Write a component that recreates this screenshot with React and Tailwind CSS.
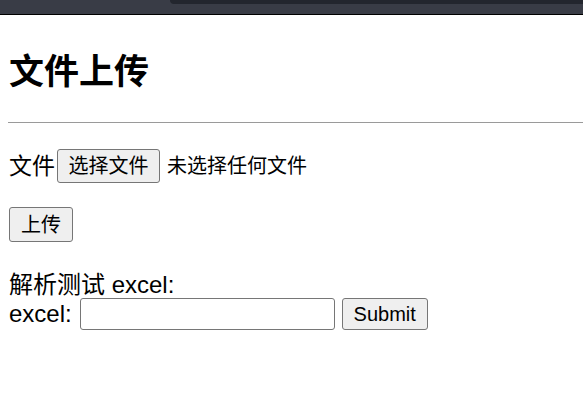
export default function App() {
  const body = { fontFamily: '"Liberation Sans", "Noto Sans CJK SC", sans-serif' };
  return (
    <div className="min-h-[405px] w-[583px] overflow-hidden bg-white text-black" style={body}>
      <div className="relative h-[15px] border-b border-black bg-[#393c46]">
        <div className="absolute right-0 top-0 left-[170px] h-[4px] rounded-bl-[8px] bg-[#23262e]" />
      </div>
      <div className="pl-[9px]">
        <h1 className="mt-[37px] text-[35px] font-bold leading-[40px]">文件上传</h1>
        <hr className="-ml-[1px] mt-[30px] border-t border-[#9a9a9a]" />
        <div className="mt-[26px] flex h-[34px] items-center">
          <span className="text-[23px] leading-[28px]">文件</span>
          <button className="ml-[2px] h-[34px] w-[103px] rounded-[3px] border border-[#767676] bg-[#efefef] text-[20px] leading-[24px]">
            选择文件
          </button>
          <span className="ml-[7px] text-[20px] leading-[24px]">未选择任何文件</span>
        </div>
        <button className="mt-[24px] block h-[35px] w-[64px] rounded-[3px] border border-[#767676] bg-[#efefef] text-[20px] leading-[24px]">
          上传
        </button>
        <div className="mt-[30px] text-[24px] leading-[26px]">解析测试 excel:</div>
        <div className="flex h-[32px] items-center">
          <span className="text-[24px] leading-[26px]">excel:</span>
          <input
            type="text"
            className="ml-[8px] h-[32px] w-[255px] rounded-[3px] border border-[#767676] bg-white"
          />
          <button className="ml-[7px] h-[32px] w-[86px] rounded-[3px] border border-[#767676] bg-[#efefef] text-[20px] leading-[24px]">
            Submit
          </button>
        </div>
      </div>
    </div>
  );
}
